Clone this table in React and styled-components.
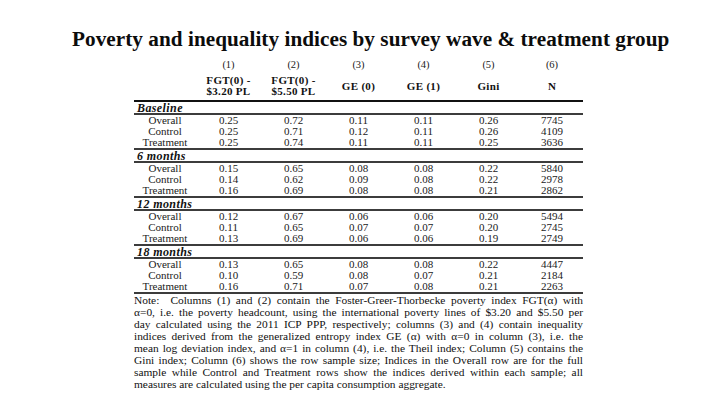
import styled, { createGlobalStyle } from 'styled-components'

const GlobalStyle = createGlobalStyle`
    html, body {
        margin: 0;
        padding: 0;
        background: #ffffff;
    }
    body {
        font-family: "Liberation Serif", "DejaVu Serif", serif;
        color: #111;
    }
`

const columns = ['(1)', '(2)', '(3)', '(4)', '(5)', '(6)']

const headings = [
    ['FGT(0) -', '$3.20 PL'],
    ['FGT(0) -', '$5.50 PL'],
    ['GE (0)'],
    ['GE (1)'],
    ['Gini'],
    ['N'],
]

const sections = [
    {
        name: 'Baseline',
        rows: [
            ['Overall', '0.25', '0.72', '0.11', '0.11', '0.26', '7745'],
            ['Control', '0.25', '0.71', '0.12', '0.11', '0.26', '4109'],
            ['Treatment', '0.25', '0.74', '0.11', '0.11', '0.25', '3636'],
        ],
    },
    {
        name: '6 months',
        rows: [
            ['Overall', '0.15', '0.65', '0.08', '0.08', '0.22', '5840'],
            ['Control', '0.14', '0.62', '0.09', '0.08', '0.22', '2978'],
            ['Treatment', '0.16', '0.69', '0.08', '0.08', '0.21', '2862'],
        ],
    },
    {
        name: '12 months',
        rows: [
            ['Overall', '0.12', '0.67', '0.06', '0.06', '0.20', '5494'],
            ['Control', '0.11', '0.65', '0.07', '0.07', '0.20', '2745'],
            ['Treatment', '0.13', '0.69', '0.06', '0.06', '0.19', '2749'],
        ],
    },
    {
        name: '18 months',
        rows: [
            ['Overall', '0.13', '0.65', '0.08', '0.08', '0.22', '4447'],
            ['Control', '0.10', '0.59', '0.08', '0.07', '0.21', '2184'],
            ['Treatment', '0.16', '0.71', '0.07', '0.08', '0.21', '2263'],
        ],
    },
]

const noteLines = [
    'Note:\u00a0 Columns (1) and (2) contain the Foster-Greer-Thorbecke poverty index FGT(α) with',
    'α=0, i.e. the poverty headcount, using the international poverty lines of $3.20 and $5.50 per',
    'day calculated using the 2011 ICP PPP, respectively; columns (3) and (4) contain inequality',
    'indices derived from the generalized entropy index GE (α) with α=0 in column (3), i.e. the',
    'mean log deviation index, and α=1 in column (4), i.e. the Theil index; Column (5) contains the',
    'Gini index; Column (6) shows the row sample size; Indices in the Overall row are for the full',
    'sample while Control and Treatment rows show the indices derived within each sample; all',
    'measures are calculated using the per capita consumption aggregate.',
]

function App() {
    return (
        <Page>
            <GlobalStyle />
            <Title>Poverty and inequality indices by survey wave &amp; treatment group</Title>
            <Table>
                <NumberRow>
                    <span />
                    {columns.map(c => <Cell key={c}>{c}</Cell>)}
                </NumberRow>
                <HeadRow>
                    <span />
                    {headings.map((lines, i) => (
                        <HeadCell key={i}>
                            {lines.map(l => <div key={l}>{l}</div>)}
                        </HeadCell>
                    ))}
                </HeadRow>
                {sections.map(section => (
                    <Section key={section.name}>
                        <SectionLabel>{section.name}</SectionLabel>
                        {section.rows.map(row => (
                            <DataRow key={row[0]}>
                                {row.map((value, i) => <Cell key={i}>{value}</Cell>)}
                            </DataRow>
                        ))}
                    </Section>
                ))}
                <Note>
                    {noteLines.map((line, i) => (
                        <NoteLine key={i} $last={i === noteLines.length - 1}>{line}</NoteLine>
                    ))}
                </Note>
            </Table>
        </Page>
    )
}

export default App

const Page = styled.div`
    width: 720px;
    height: 405px;
    overflow: hidden;
    display: flex;
    flex-direction: column;
`

const Title = styled.h1`
    margin: 27px 0 0 72px;
    font-size: 21.2px;
    line-height: 25px;
    letter-spacing: 0.05px;
    font-weight: bold;
    white-space: nowrap;
    color: #0c0c0c;
`

const Table = styled.div`
    margin: 6px 0 0 134px;
    width: 449px;
    font-size: 11px;
`

const Grid = styled.div`
    display: grid;
    grid-template-columns: 62px repeat(5, 65px) 62px;
    align-items: center;
`

const NumberRow = styled(Grid)`
    height: 14px;
    line-height: 14px;
    font-size: 10.5px;
    color: #222;
`

const HeadRow = styled(Grid)`
    height: 28px;
    border-bottom: 2px solid #111;
`

const HeadCell = styled.div`
    text-align: center;
    font-weight: bold;
    font-size: 11px;
    line-height: 11px;
    letter-spacing: 0.3px;
`

const Section = styled.div`
    border-bottom: 2px solid #3c3c3c;
`

const SectionLabel = styled.div`
    height: 11px;
    line-height: 12px;
    padding-left: 3px;
    font-size: 12px;
    font-weight: bold;
    font-style: italic;
    letter-spacing: 0.4px;
    border-bottom: 2px solid #3c3c3c;
`

const DataRow = styled(Grid)`
    height: 11px;
    line-height: 11px;
    color: #1a1a1a;
`

const Cell = styled.div`
    text-align: center;
    white-space: nowrap;
`

const Note = styled.div`
    font-size: 11.4px;
    line-height: 12px;
`

const NoteLine = styled.div`
    height: 12px;
    white-space: nowrap;
    text-align: justify;
    text-align-last: ${p => (p.$last ? 'left' : 'justify')};
`
